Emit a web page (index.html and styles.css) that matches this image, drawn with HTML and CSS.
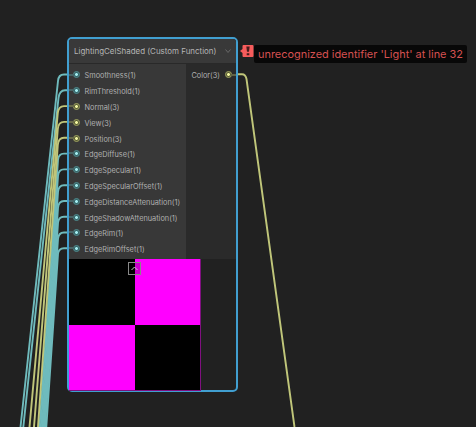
FILE: index.html
```
<!DOCTYPE html>
<html lang="en">
<head>
<meta charset="utf-8">
<title>Shader Graph</title>
<link rel="stylesheet" href="styles.css">
</head>
<body>
<main class="canvas">
  <svg class="wires" width="476" height="427" viewBox="0 0 476 427">
    <g class="scalar">
      <path d="M68 74.5H64Q58.5 74.5 58 81L20.5 427"/>
      <path d="M68 90.3H65Q59.5 90.3 58.5 98L23.3 427"/>
      <path d="M68 153.6H64Q58.5 153.6 58 160L39.5 427"/>
      <path d="M68 169.4H64Q58.5 169.4 58 176L40.8 427"/>
      <path d="M68 185.2H64Q58.5 185.2 58 192L42 427"/>
      <path d="M68 201H64Q58.5 201 58 208L43 427"/>
      <path d="M68 216.8H64Q58.5 216.8 58 223L44 427"/>
      <path d="M68 232.5H64Q58.5 232.5 58 239L45 427"/>
      <path d="M68 248.2H64Q58.5 248.2 58 254L46.3 427"/>
    </g>
    <g class="vector">
      <path d="M68 106.1H64Q58.5 106.1 57.8 113L29.5 427"/>
      <path d="M68 121.9H64Q58.5 121.9 57.8 129L34 427"/>
      <path d="M68 137.8H64Q58.5 137.8 57.8 145L38 427"/>
      <path d="M237 74.2H242Q245.6 74.2 246.5 79L294.5 427"/>
    </g>
  </svg>
  <section class="node">
    <header class="title"><span>LightingCelShaded (Custom Function)</span>
      <svg width="8" height="6" viewBox="0 0 8 6"><path d="M1.5 1.5L4 4.5L6.5 1.5"/></svg>
    </header>
    <div class="ports">
      <ul class="inputs">
        <li><i class="port"></i>Smoothness(1)</li>
        <li><i class="port"></i>RimThreshold(1)</li>
        <li><i class="port vec"></i>Normal(3)</li>
        <li><i class="port vec"></i>View(3)</li>
        <li><i class="port vec"></i>Position(3)</li>
        <li><i class="port"></i>EdgeDiffuse(1)</li>
        <li><i class="port"></i>EdgeSpecular(1)</li>
        <li><i class="port"></i>EdgeSpecularOffset(1)</li>
        <li><i class="port"></i>EdgeDistanceAttenuation(1)</li>
        <li><i class="port"></i>EdgeShadowAttenuation(1)</li>
        <li><i class="port"></i>EdgeRim(1)</li>
        <li><i class="port"></i>EdgeRimOffset(1)</li>
      </ul>
      <div class="outputs"><span>Color(3)</span><i class="port vec"></i></div>
    </div>
    <div class="preview">
      <b></b><b class="pink"></b><b class="pink"></b><b></b>
      <svg class="collapse" width="13" height="13" viewBox="0 0 13 13"><rect x=".5" y=".5" width="12" height="12"/><path d="M3.5 8L6.5 5L9.5 8"/></svg>
    </div>
  </section>
  <aside class="error">
    <svg width="14" height="13" viewBox="0 0 14 13"><path class="flag" d="M0 6L2.5 4V1Q2.5 0 3.5 0H12.5Q13.5 0 13.5 1V11Q13.5 12 12.5 12H3.5Q2.5 12 2.5 11V8Z"/><path class="mark" d="M6.3 1.5H9.7L9 6.8H7ZM6.7 8.2H9.3V10.2H6.7Z"/></svg>
    <p>unrecognized identifier 'Light' at line 32</p>
  </aside>
</main>
</body>
</html>
```
FILE: styles.css
```
* { box-sizing: border-box; }
body { margin: 0; background: #212121; font-family: Inter, "Liberation Sans", sans-serif; }
.canvas { position: relative; width: 476px; height: 427px; overflow: hidden; }
.wires { position: absolute; inset: 0; fill: none; stroke-width: 1.9; }
.scalar { stroke: #6fbbbd; }
.vector { stroke: #c0c67a; }

.node {
  position: absolute; left: 67px; top: 37px; width: 171px; height: 355px;
  border: 2px solid #419fd0; border-radius: 5px; background: #212121;
}
.title {
  display: flex; align-items: center; justify-content: space-between;
  height: 25px; padding: 0 4px 0 5px; background: #393939; border-bottom: 1px solid #292929;
  border-radius: 3px 3px 0 0; color: #b5b5b5; font-size: 7.95px; white-space: nowrap;
}
.title svg { fill: none; stroke: #686868; }
.ports { display: flex; height: 195px; font-size: 7.35px; color: #b0b0b0; }
.inputs { width: 117px; height: 195px; margin: 0; padding: 3px 0 0; list-style: none; background: #383838; }
.inputs li { position: relative; display: flex; align-items: center; height: 15.8px; padding: 2px 0 0 5px; gap: 5.5px; white-space: nowrap; }
.inputs li::before {
  content: ""; position: absolute; left: 0; top: 6.5px; width: 5px; height: 2px; background: #486465;
}
.inputs li:has(.vec)::before { background: #67694a; }
.port {
  flex: none; width: 5px; height: 5px; border-radius: 50%;
  background: radial-gradient(circle, #a4eef0 0 1px, #35686b 1.8px 3px);
  outline: 1px solid #4f9093; outline-offset: -.5px; margin-top: -2px;
}
.port.vec { background: radial-gradient(circle, #f3f7a1 0 1px, #5c5f35 1.8px 3px); outline-color: #a3a860; }
.outputs { position: relative; flex: 1; display: flex; align-items: flex-start; gap: 5.5px; padding: 6.5px 5.5px 0; background: #2a2a2a; }
.outputs .port { margin-top: 1.5px; }
.outputs::after { content: ""; position: absolute; right: 0; top: 9.5px; width: 5px; height: 2px; background: #606345; }
.preview {
  position: relative; display: grid; grid-template: 66px 65px / 66px 65px;
  width: 132px; height: 132px; border-right: 1px solid #801080; border-bottom: 1px solid #801080;
  background: #000;
}
.preview b { background: #000; }
.preview .pink { background: #f0f; }
.collapse { position: absolute; left: 59px; top: 3px; fill: #0003; stroke: #888; }
.collapse path { stroke: #ccc; fill: none; }

.error { position: absolute; left: 240px; top: 45px; display: flex; }
.error svg { flex: none; }
.flag { fill: #f75c5c; }
.mark { fill: #481b1b; }
.error p {
  margin: 0; width: 213px; height: 18px; padding-left: 4px; border-radius: 2px; background: #080808;
  color: #d65151; font-size: 10.93px; line-height: 19px; white-space: nowrap;
}
```
